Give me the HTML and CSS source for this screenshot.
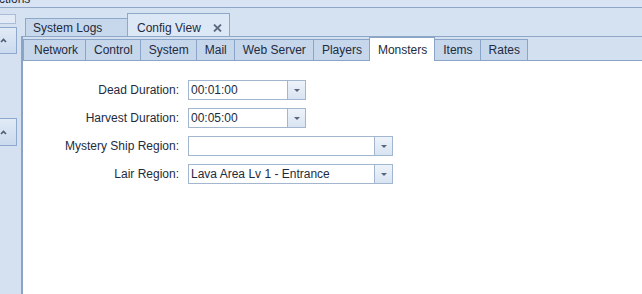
FILE: index.html
```html
<!DOCTYPE html>
<html lang="en">
<head>
    <meta charset="UTF-8">
    <meta name="viewport" content="width=device-width, initial-scale=1.0">
    <title>Config View</title>
    <link rel="stylesheet" href="styles.css">
</head>
<body>

    <div class="top-strip">
        <div class="top-tab"><span>Actions</span></div>
    </div>

    <div class="main">
        <!-- collapsed side panel -->
        <div class="sidebar">
            <div class="side-box"></div>
            <button class="side-btn">
                <svg width="7" height="5" viewBox="0 0 7 5"><path d="M1 4 L3.5 1.5 L6 4" fill="none" stroke="#4b5b72" stroke-width="1.6"/></svg>
            </button>
            <button class="side-btn lower">
                <svg width="7" height="5" viewBox="0 0 7 5"><path d="M1 4 L3.5 1.5 L6 4" fill="none" stroke="#4b5b72" stroke-width="1.6"/></svg>
            </button>
        </div>

        <div class="workspace">
            <div class="doc-tabs">
                <div class="doc-tab">System Logs</div>
                <div class="doc-tab active">
                    Config View
                    <span class="close">
                        <svg width="9" height="8" viewBox="0 0 9 8"><path d="M1 0.5 L8 7.5 M8 0.5 L1 7.5" stroke="#5b6a80" stroke-width="1.8"/></svg>
                    </span>
                </div>
            </div>

            <div class="page">
                <div class="page-tabs">
                    <div class="page-tab">Network</div>
                    <div class="page-tab">Control</div>
                    <div class="page-tab">System</div>
                    <div class="page-tab">Mail</div>
                    <div class="page-tab">Web Server</div>
                    <div class="page-tab">Players</div>
                    <div class="page-tab active">Monsters</div>
                    <div class="page-tab">Items</div>
                    <div class="page-tab">Rates</div>
                </div>

                <div class="panel">
                    <div class="form">
                        <label>Dead Duration:</label>
                        <div class="combo short"><span class="value">00:01:00</span><span class="drop"></span></div>

                        <label>Harvest Duration:</label>
                        <div class="combo short"><span class="value">00:05:00</span><span class="drop"></span></div>

                        <label>Mystery Ship Region:</label>
                        <div class="combo long"><span class="value"></span><span class="drop"></span></div>

                        <label>Lair Region:</label>
                        <div class="combo long"><span class="value">Lava Area Lv 1 - Entrance</span><span class="drop"></span></div>
                    </div>
                </div>
            </div>
        </div>
    </div>

</body>
</html>
```

FILE: styles.css
```css
html, body {
    height: 294px;
    overflow: hidden;
}
body {
    margin: 0;
    font-family: "Liberation Sans", Arial, sans-serif;
    font-size: 12px;
    color: #1e2b40;
    background: #d5e1f0;
}
.top-strip {
    height: 7px;
    border-bottom: 1px solid #8fa6c6;
    background: #d8e4f3;
    overflow: hidden;
}
.top-tab {
    width: 65px;
    height: 7px;
    border-right: 1px solid #a9bcd6;
}
.top-tab span {
    display: block;
    margin: -7px 0 0 -9px;
    line-height: 12px;
}
.main {
    display: flex;
    height: 286px;
}
.sidebar {
    width: 21px;
    flex-shrink: 0;
    display: flex;
    flex-direction: column;
    align-items: flex-start;
    padding-top: 6px;
    box-sizing: border-box;
}
.side-box {
    width: 16px;
    height: 10px;
    box-sizing: border-box;
    border: 1px solid #a7bcd8;
    border-left: none;
    background: #e2eaf6;
}
.side-btn {
    width: 17px;
    height: 27px;
    margin: 3px 0 0 0;
    padding: 0;
    border: 1px solid #8ea9cc;
    border-left: none;
    background: linear-gradient(#e1eaf6, #cbdaee);
    display: flex;
    align-items: center;
}
.side-btn.lower {
    height: 28px;
    margin-top: 64px;
}
.workspace {
    flex: 1;
    display: flex;
    flex-direction: column;
}
.doc-tabs {
    height: 28px;
    flex-shrink: 0;
    border-bottom: 1px solid #8fa6c6;
    display: flex;
    align-items: flex-end;
    padding-left: 4px;
    background: #d5e2f1;
}
.doc-tab {
    width: 103px;
    height: 18px;
    box-sizing: border-box;
    border: 1px solid #8ea8c9;
    border-bottom: none;
    margin-right: -1px;
    padding: 0 8px 0 7px;
    background: #c7d7ec;
    display: flex;
    align-items: center;
    justify-content: space-between;
}
.doc-tab.active {
    height: 23px;
    padding: 5px 7px 0 9px;
    background: #dde8f6;
}
.close {
    display: flex;
}
.page {
    flex: 1;
    border-left: 2px solid #8aa4c6;
    display: flex;
    flex-direction: column;
}
.page-tabs {
    height: 23px;
    flex-shrink: 0;
    border-bottom: 1px solid #8aa5c8;
    display: flex;
    align-items: flex-end;
    background: #d3e0f0;
}
.page-tab {
    height: 21px;
    box-sizing: border-box;
    border: 1px solid #8aa5c8;
    border-bottom: none;
    margin-right: -1px;
    padding: 0 7px 0 8px;
    background: #c6d6eb;
    display: flex;
    align-items: center;
}
.page-tab:first-child {
    padding-left: 10px;
}
.page-tab.active {
    height: 24px;
    margin-bottom: -1px;
    background: white;
}
.panel {
    flex: 1;
    background: white;
    padding-top: 19px;
}
.form {
    display: grid;
    grid-template-columns: 156px auto;
    column-gap: 9px;
    row-gap: 8px;
    align-items: center;
    justify-content: start;
}
.form label {
    text-align: right;
}
.combo {
    height: 20px;
    box-sizing: border-box;
    border: 1px solid #a3b6cf;
    background: white;
    display: flex;
}
.combo.short {
    width: 118px;
}
.combo.long {
    width: 205px;
}
.combo .value {
    flex: 1;
    padding-left: 2px;
    line-height: 18px;
    white-space: nowrap;
}
.combo .drop {
    width: 17px;
    border-left: 1px solid #a3b6cf;
    background: linear-gradient(#edf3fa, #d9e4f2);
    display: flex;
    align-items: center;
    justify-content: center;
}
.combo .drop::after {
    content: "";
    border-left: 3px solid transparent;
    border-right: 3px solid transparent;
    border-top: 3px solid #56667d;
}
```
